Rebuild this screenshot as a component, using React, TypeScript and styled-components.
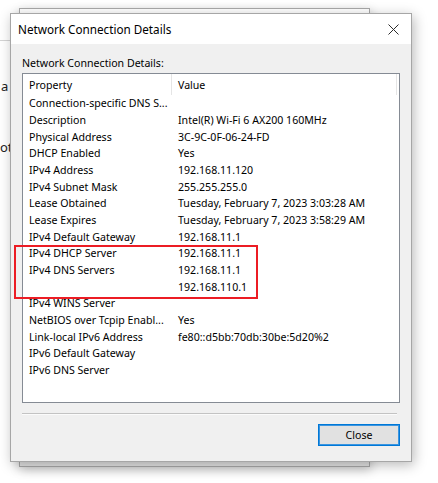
import React from "react";
import styled, { createGlobalStyle } from "styled-components";

const Global = createGlobalStyle`
  html, body { margin: 0; padding: 0; background: #ffffff; }
  body { font-family: "Noto Sans", "Open Sans", sans-serif; color: #000; }
`;

const Desktop = styled.div`
  position: relative;
  width: 438px;
  height: 483px;
  overflow: hidden;
  background: #ffffff;
`;

const AppText = styled.span<{ $x: number; $y: number }>`
  position: absolute;
  left: ${(p) => p.$x}px;
  top: ${(p) => p.$y}px;
  font: 13px "Noto Sans", sans-serif;
  color: #222;
  line-height: 16px;
`;

const AppRule = styled.div`
  position: absolute;
  left: 0;
  top: 40px;
  width: 12px;
  height: 1px;
  background: #d4d4d4;
`;

const BackWindow = styled.div`
  position: absolute;
  left: 19px;
  top: 8px;
  width: 351px;
  height: 459px;
  box-sizing: border-box;
  border: 1px solid #a9a9a9;
  background: #e4e4e4;
  box-shadow: 1px 3px 10px rgba(0, 0, 0, 0.22);
  display: flex;
  flex-direction: column;
`;

const BackTitle = styled.div`
  height: 30px;
  background: #ffffff;
`;

const Dialog = styled.div`
  position: absolute;
  left: 10px;
  top: 13px;
  width: 402px;
  height: 449px;
  box-sizing: border-box;
  border: 1px solid #a6a6a6;
  background: #f0f0f0;
  box-shadow: 2px 3px 12px rgba(0, 0, 0, 0.28);
  display: flex;
  flex-direction: column;
`;

const TitleBar = styled.div`
  height: 30px;
  flex: none;
  background: #ffffff;
  display: flex;
  align-items: center;
  justify-content: space-between;
  padding: 0 12px 0 7px;
`;

const Title = styled.span`
  font-size: 11.7px;
  color: #000;
  line-height: 16px;
`;

const CloseGlyph = styled.svg`
  width: 11px;
  height: 11px;
  display: block;
`;

const Body = styled.div`
  flex: 1;
  display: flex;
  flex-direction: column;
  padding: 12px 11px 15px 11px;
  min-height: 0;
`;

const Caption = styled.div`
  font-size: 10.6px;
  line-height: 14px;
  height: 14px;
  margin-bottom: 3px;
`;

const ListBox = styled.div`
  height: 330px;
  box-sizing: border-box;
  border: 1px solid #858b94;
  background: #ffffff;
  display: flex;
  flex-direction: column;
`;

const HeaderRow = styled.div`
  display: grid;
  grid-template-columns: 149px 225px;
  height: 21px;
  flex: none;
`;

const HeaderCell = styled.div`
  display: flex;
  align-items: center;
  padding-left: 6px;
  border-right: 1px solid #e5e5e5;
  font-size: 10.6px;
  line-height: 14px;
`;

const Row = styled.div`
  display: grid;
  grid-template-columns: 149px 1fr;
  height: 16.67px;
  flex: none;
`;

const Cell = styled.div`
  display: flex;
  align-items: center;
  padding-left: 6px;
  font-size: 10.6px;
  line-height: 14px;
  white-space: nowrap;
  overflow: hidden;
`;

const Separator = styled.div`
  height: 1px;
  margin: 10px 3px 10px 0;
  background: #c3c3c3;
  box-shadow: 0 1px 0 #fbfbfb;
`;

const Footer = styled.div`
  display: flex;
  justify-content: flex-end;
`;

const Button = styled.button`
  width: 82px;
  height: 22px;
  box-sizing: border-box;
  border: 1px solid #0078d7;
  box-shadow: inset 0 0 0 1px #3b95e0;
  background: #e1e1e1;
  font-family: "Noto Sans", sans-serif;
  font-size: 10.6px;
  color: #000;
  padding: 0;
  line-height: 14px;
`;

const Highlight = styled.div`
  position: absolute;
  left: 14px;
  top: 245px;
  width: 244px;
  height: 54px;
  box-sizing: border-box;
  border: 2px solid #ec1c24;
  pointer-events: none;
`;

const rows: [string, string][] = [
  ["Connection-specific DNS S...", ""],
  ["Description", "Intel(R) Wi-Fi 6 AX200 160MHz"],
  ["Physical Address", "3C-9C-0F-06-24-FD"],
  ["DHCP Enabled", "Yes"],
  ["IPv4 Address", "192.168.11.120"],
  ["IPv4 Subnet Mask", "255.255.255.0"],
  ["Lease Obtained", "Tuesday, February 7, 2023 3:03:28 AM"],
  ["Lease Expires", "Tuesday, February 7, 2023 3:58:29 AM"],
  ["IPv4 Default Gateway", "192.168.11.1"],
  ["IPv4 DHCP Server", "192.168.11.1"],
  ["IPv4 DNS Servers", "192.168.11.1"],
  ["", "192.168.110.1"],
  ["IPv4 WINS Server", ""],
  ["NetBIOS over Tcpip Enabl...", "Yes"],
  ["Link-local IPv6 Address", "fe80::d5bb:70db:30be:5d20%2"],
  ["IPv6 Default Gateway", ""],
  ["IPv6 DNS Server", ""],
];

export default function App() {
  return (
    <>
      <Global />
      <Desktop>
        <AppRule />
        <AppText $x={1} $y={78}>a</AppText>
        <AppText $x={0} $y={139}>ot</AppText>
        <BackWindow>
          <BackTitle />
        </BackWindow>
        <Dialog>
          <TitleBar>
            <Title>Network Connection Details</Title>
            <CloseGlyph viewBox="0 0 11 11">
              <path d="M0.5 0.5 L10.5 10.5 M10.5 0.5 L0.5 10.5" stroke="#2b2b2b" strokeWidth="1" fill="none" />
            </CloseGlyph>
          </TitleBar>
          <Body>
            <Caption>Network Connection Details:</Caption>
            <ListBox>
              <HeaderRow>
                <HeaderCell>Property</HeaderCell>
                <HeaderCell>Value</HeaderCell>
              </HeaderRow>
              {rows.map(([k, v], i) => (
                <Row key={i}>
                  <Cell>{k}</Cell>
                  <Cell>{v}</Cell>
                </Row>
              ))}
            </ListBox>
            <Separator />
            <Footer>
              <Button>Close</Button>
            </Footer>
          </Body>
        </Dialog>
        <Highlight />
      </Desktop>
    </>
  );
}
